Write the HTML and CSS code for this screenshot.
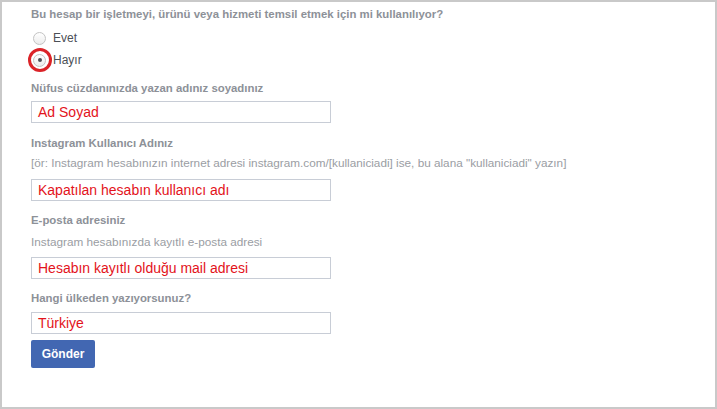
FILE: index.html
```html
<!DOCTYPE html>
<html lang="tr">
<head>
<meta charset="utf-8">
<title>Form</title>
<link rel="stylesheet" href="styles.css">
</head>
<body>
<div class="frame">
  <form class="form">
    <div class="title">Bu hesap bir işletmeyi, ürünü veya hizmeti temsil etmek için mi kullanılıyor?</div>
    <div class="radios">
      <div class="radio-row"><span class="radio"></span><span class="radio-text">Evet</span></div>
      <div class="radio-row"><span class="radio checked"></span><span class="radio-text">Hayır</span><span class="ring"></span></div>
    </div>
    <div class="label l1">Nüfus cüzdanınızda yazan adınız soyadınız</div>
    <div class="field f1">Ad Soyad</div>
    <div class="label l2">Instagram Kullanıcı Adınız</div>
    <div class="hint h2">[ör: Instagram hesabınızın internet adresi instagram.com/[kullaniciadi] ise, bu alana "kullaniciadi" yazın]</div>
    <div class="field f2">Kapatılan hesabın kullanıcı adı</div>
    <div class="label l3">E-posta adresiniz</div>
    <div class="hint h3">Instagram hesabınızda kayıtlı e-posta adresi</div>
    <div class="field f3">Hesabın kayıtlı olduğu mail adresi</div>
    <div class="label l4">Hangi ülkeden yazıyorsunuz?</div>
    <div class="field f4">Türkiye</div>
    <div class="button">Gönder</div>
  </form>
</div>
</body>
</html>
```
FILE: styles.css
```css
html, body {
  margin: 0;
  padding: 0;
  background: #ffffff;
}
.frame {
  width: 717px;
  height: 409px;
  box-sizing: border-box;
  border: 2px solid #c9c9c9;
  background: #fff;
  font-family: "Liberation Sans", Arial, sans-serif;
}
.form {
  padding: 4px 0 0 29px;
  margin: 0;
}
.title, .label {
  font-size: 11.4px;
  line-height: 16px;
  font-weight: bold;
  color: #8d9198;
}
.hint {
  font-size: 11.75px;
  line-height: 16px;
  color: #9a9da3;
}
.radios {
  margin-top: 5px;
}
.radio-row {
  position: relative;
  height: 22px;
  display: flex;
  align-items: center;
}
.radio {
  width: 11px;
  height: 11px;
  margin-left: 2px;
  border-radius: 50%;
  border: 1px solid #c3c3c3;
  background: linear-gradient(#ffffff, #ececec);
  box-sizing: content-box;
  position: relative;
}
.radio.checked::after {
  content: "";
  position: absolute;
  left: 3.5px;
  top: 3.5px;
  width: 4px;
  height: 4px;
  border-radius: 50%;
  background: #4d5157;
}
.radio-text {
  margin-left: 7px;
  font-size: 12px;
  color: #4b4f56;
}
.ring {
  position: absolute;
  left: -3.5px;
  top: -1.5px;
  width: 18px;
  height: 18px;
  border: 3px solid #db2328;
  border-radius: 50%;
}
.label.l1 { margin-top: 9px; }
.label.l2 { margin-top: 12px; }
.label.l3, .label.l4 { margin-top: 11px; }
.hint.h2 { margin-top: 4px; }
.hint.h3 { margin-top: 6px; }
.field {
  width: 300px;
  height: 22px;
  box-sizing: border-box;
  border: 1px solid #c8cdd6;
  padding-left: 6px;
  font-size: 14px;
  line-height: 20px;
  color: #e3131b;
}
.field.f1 { margin-top: 5px; }
.field.f2 { margin-top: 8px; }
.field.f3 { margin-top: 7px; }
.field.f4 { margin-top: 6px; }
.button {
  margin-top: 6px;
  width: 64px;
  height: 28px;
  border-radius: 2px;
  background: #4267b2;
  color: #fff;
  font-size: 12px;
  font-weight: bold;
  line-height: 28px;
  text-align: center;
}
```
